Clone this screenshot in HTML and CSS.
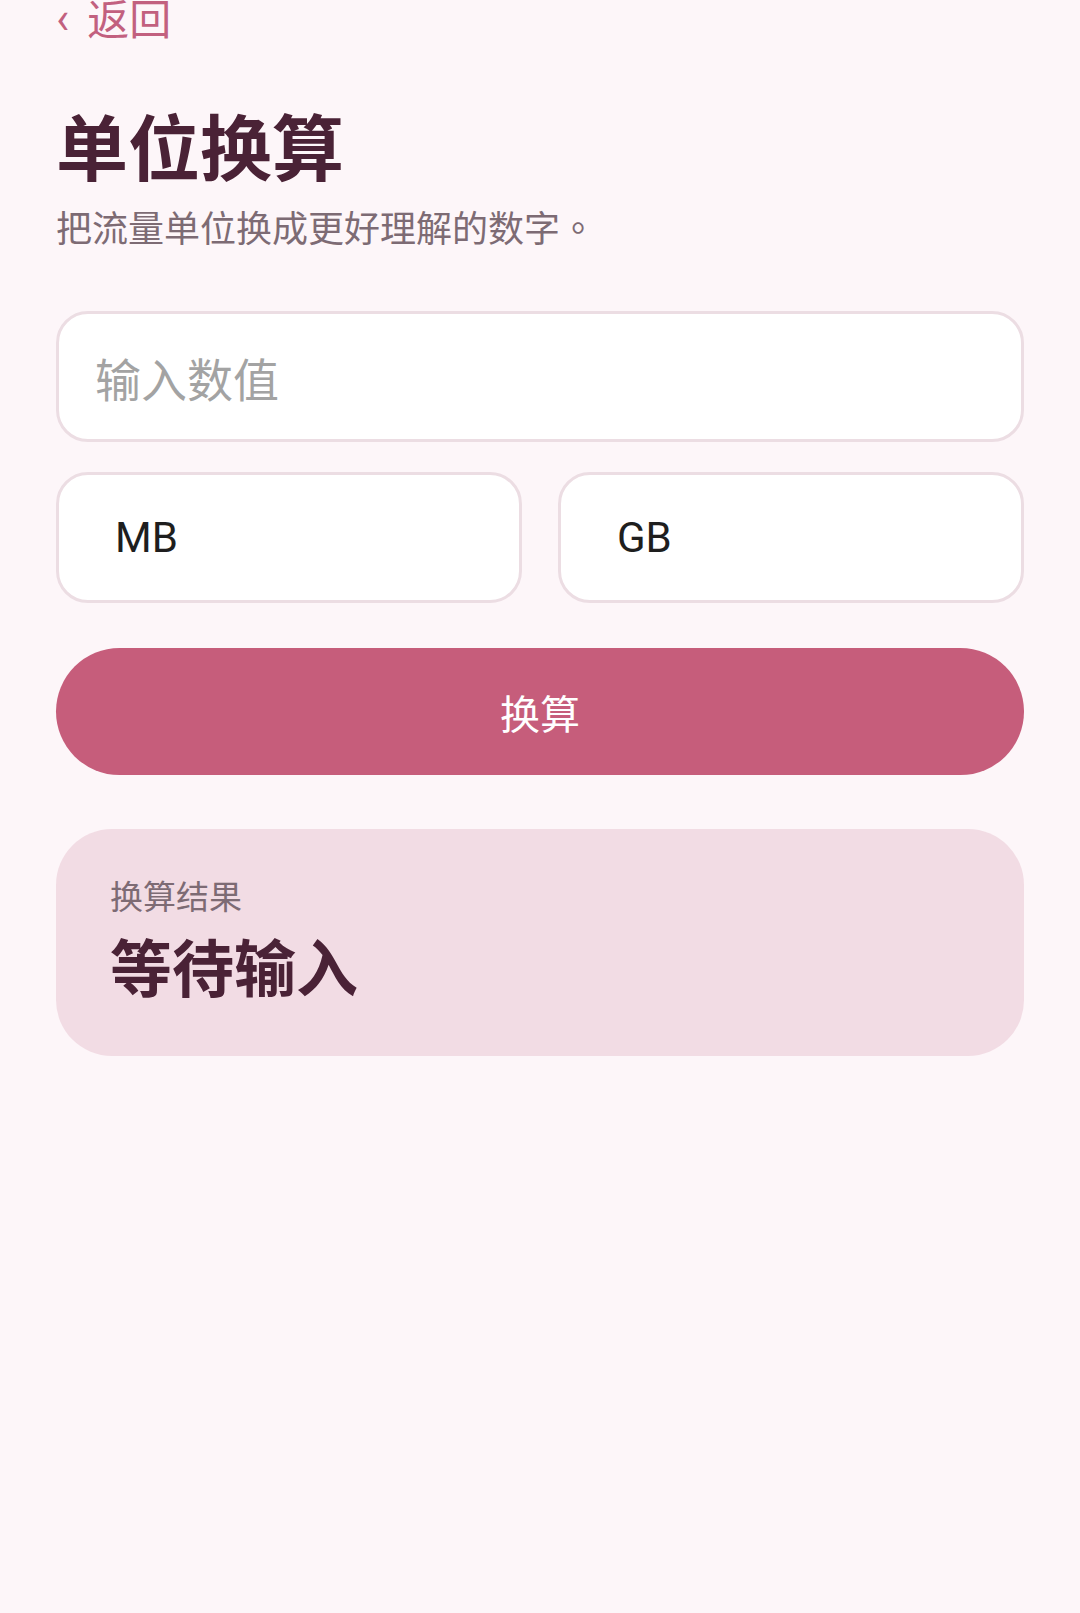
FILE: index.html
```html
<!DOCTYPE html>
<html lang="zh-CN">
<head>
<meta charset="utf-8">
<title>单位换算</title>
<link rel="stylesheet" href="styles.css">
</head>
<body>
<main class="page">
  <a class="back" href="#"><span class="chev">‹</span><span class="back-text">返回</span></a>
  <h1 class="title">单位换算</h1>
  <p class="subtitle">把流量单位换成更好理解的数字<span class="punct" lang="zh-Hant-TW">。</span></p>
  <div class="field">
    <input class="value-input" type="text" placeholder="输入数值">
  </div>
  <div class="units">
    <div class="unit">MB</div>
    <div class="unit">GB</div>
  </div>
  <button class="convert" type="button">换算</button>
  <section class="result">
    <div class="result-label">换算结果</div>
    <div class="result-value">等待输入</div>
  </section>
</main>
</body>
</html>
```

FILE: styles.css
```css
html, body {
  margin: 0;
  padding: 0;
  background: #fdf6f9;
}
body {
  font-family: Roboto, "Noto Sans CJK SC", "Noto Sans", sans-serif;
  color: #4a2236;
  height: 1613px;
  overflow: hidden;
}
.page {
  padding: 0 56px;
  display: flex;
  flex-direction: column;
}
.back {
  display: flex;
  align-items: center;
  gap: 18px;
  color: #c2607f;
  text-decoration: none;
  font-family: "Noto Sans CJK SC", sans-serif;
  font-size: 42px;
  line-height: 42px;
  margin-top: -4px;
  height: 42px;
  align-self: flex-start;
}
.chev {
  font-family: Roboto, sans-serif;
  font-size: 44px;
  line-height: 42px;
  margin-top: 2px;
}
.title {
  margin: 56px 0 0;
  font-family: "Noto Sans CJK SC", sans-serif;
  font-size: 72px;
  line-height: 100px;
  font-weight: 700;
  color: #4a2236;
}
.subtitle {
  margin: 7px 0 0;
  font-family: "Noto Sans CJK SC", sans-serif;
  font-size: 36px;
  line-height: 50px;
  color: #7d6b74;
}
.punct {
  font-family: "Noto Sans CJK TC", sans-serif;
}
.field {
  margin-top: 60px;
}
.value-input {
  box-sizing: border-box;
  width: 100%;
  height: 131px;
  border: 3px solid #ecdde3;
  border-radius: 32px;
  background: #ffffff;
  padding: 0 36px;
  font-family: "Noto Sans CJK SC", sans-serif;
  font-size: 46px;
  color: #333;
  outline: none;
}
.value-input::placeholder {
  color: #a3a3a3;
}
.units {
  margin-top: 30px;
  display: grid;
  grid-template-columns: 1fr 1fr;
  gap: 36px;
}
.unit {
  box-sizing: border-box;
  height: 131px;
  border: 3px solid #ecdde3;
  border-radius: 32px;
  background: #ffffff;
  display: flex;
  align-items: center;
  padding-left: 56px;
  font-family: Roboto, sans-serif;
  font-size: 42px;
  color: #1e1e1e;
}
.convert {
  margin-top: 45px;
  height: 127px;
  border: none;
  border-radius: 64px;
  background: #c65d7b;
  color: #ffffff;
  font-family: "Noto Sans CJK SC", sans-serif;
  font-size: 40px;
  cursor: pointer;
}
.result {
  margin-top: 54px;
  box-sizing: border-box;
  height: 227px;
  border-radius: 56px;
  background: #f2dce4;
  padding: 44px 54px 0;
}
.result-label {
  font-family: "Noto Sans CJK SC", sans-serif;
  font-size: 33px;
  line-height: 44px;
  color: #7d6b74;
}
.result-value {
  margin-top: 10px;
  font-family: "Noto Sans CJK SC", sans-serif;
  font-size: 62px;
  line-height: 76px;
  font-weight: 700;
  color: #4a2236;
}
```
